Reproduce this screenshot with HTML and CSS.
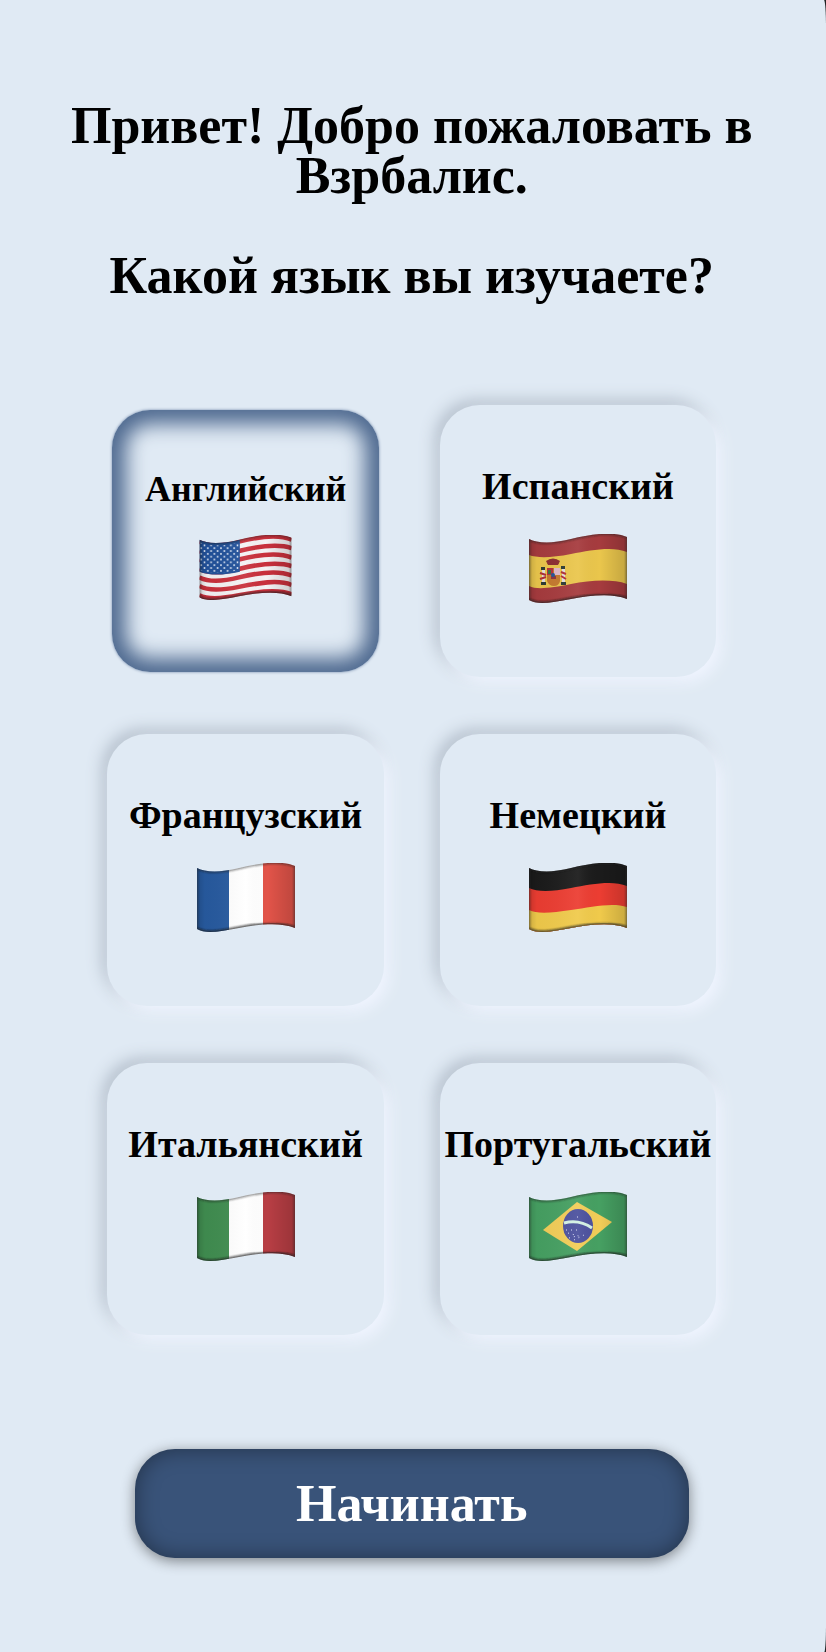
FILE: index.html
```html
<!DOCTYPE html>
<html lang="ru">
<head>
<meta charset="utf-8">
<meta name="viewport" content="width=device-width, initial-scale=1">
<title>Взрбалис</title>
<link rel="stylesheet" href="styles.css">
</head>
<body>
<svg class="defs" aria-hidden="true">
  <defs>
    <clipPath id="wave"><path d="M0 5c8 4 22 5 42 0s42-8 56-2v62c-14-6-36-4-56 0s-34 6-42 1z"/></clipPath>
    <linearGradient id="fold" x1="0" x2="1" y1="0" y2="0">
      <stop offset="0" stop-color="#000" stop-opacity=".16"/>
      <stop offset=".08" stop-color="#000" stop-opacity=".03"/>
      <stop offset=".5" stop-color="#fff" stop-opacity=".06"/>
      <stop offset=".72" stop-color="#000" stop-opacity="0"/>
      <stop offset=".92" stop-color="#000" stop-opacity=".12"/>
      <stop offset="1" stop-color="#000" stop-opacity=".16"/>
    </linearGradient>
    <filter id="soft" x="-10%" y="-10%" width="120%" height="120%"><feGaussianBlur stdDeviation="1.2"/></filter>
    <g id="shade">
      <path d="M0 0h98v70H0z" fill="url(#fold)"/>
      <path d="M0 5c8 4 22 5 42 0s42-8 56-2v62c-14-6-36-4-56 0s-34 6-42 1z" fill="none" stroke="#222" stroke-opacity=".65" stroke-width="2" filter="url(#soft)"/>
      <path d="M98 65c-14-6-36-4-56 0s-34 6-42 1" fill="none" stroke="#222" stroke-opacity=".5" stroke-width="3" filter="url(#soft)"/>
    </g>
    <pattern id="stars" width="7" height="6" patternUnits="userSpaceOnUse">
      <circle cx="2" cy="2" r="1" fill="#e4ecf8"/><circle cx="5.500" cy="5" r="1" fill="#e4ecf8"/>
    </pattern>
  </defs>
</svg>
<main class="page">
  <h1 class="title">Привет! Добро пожаловать в Взрбалис.</h1>
  <h2 class="title question">Какой язык вы изучаете?</h2>
  <form class="form">
    <div class="languages" role="radiogroup" aria-label="Какой язык вы изучаете?">
      <label class="card">
        <input class="choice" type="radio" name="language" value="en" checked>
        <span class="name">Английский</span>
        <svg class="flag" viewBox="0 0 98 70" aria-hidden="true">
          <g clip-path="url(#wave)">
            <path fill="#f4f2f4" d="M0 0h98v70H0z"/>
            <g fill="none" stroke="#c9303c" stroke-width="4.800">
              <path d="M0 7c8 4 22 5 42 0s42-8 56-2"/>
              <path d="M0 17c8 4 22 5 42 0s42-8 56-3"/>
              <path d="M0 26c8 4 22 5 42 0s42-8 56-2"/>
              <path d="M0 36c8 4 22 5 42 0s42-8 56-3"/>
              <path d="M0 45c8 4 22 5 42 0s42-8 56-2"/>
              <path d="M0 54c8 5 22 5 42 1s42-8 56-2"/>
              <path d="M0 64c8 4 22 4 42 0s42-7 56-1"/>
            </g>
            <path fill="#21519a" d="M0 3c10 5 26 6 43 2v34c-17 4-33 4-43 0z"/>
            <path fill="url(#stars)" d="M1 8c10 4 26 4 41 0v29c-17 4-31 4-41 0z"/>
            <use href="#shade"/>
          </g>
        </svg>
      </label>
      <label class="card">
        <input class="choice" type="radio" name="language" value="es">
        <span class="name">Испанский</span>
        <svg class="flag" viewBox="0 0 98 70" aria-hidden="true">
          <g clip-path="url(#wave)">
            <path fill="#a63b3e" d="M0 0h98v70H0z"/>
            <path fill="#eac64c" d="M0 21c8 3 22 3 42-1s42-8 56-2v32c-14-5-36-4-56 0s-34 6-42 2z"/>
            <path fill="#b98a2c" d="M18 30h12v-3l-3-2h-6l-3 2z"/>
            <path fill="#8d2f32" d="M17 27q7-5 14 0l-2 4H19z"/>
            <path fill="#2e3d35" d="M12 33h4v3h-4zm20-1h4v3h-4zM12 48h5v3h-5zm20 0h5v3h-5z"/>
            <path fill="#e4dfdc" d="M13 36h3v12h-3zm20-1h3v13h-3z"/>
            <path stroke="#b02f38" stroke-width="2" fill="none" d="m11 39 6 2m-6 4 6-2m15-5 5 2m-5 2 5 3"/>
            <path fill="#c5792e" d="M18 34h13v13q-1 5-6 5t-7-5z"/>
            <path fill="#b7303c" d="M18 34h6v7h-6z"/>
            <path fill="#dfb8c8" d="M25 34h6v7h-6z"/>
            <path fill="#39724a" d="M19 36h3v4h-3z"/>
            <path fill="#8e3540" d="M24 42v9m-2-9h5v3h-5z"/>
            <circle cx="24" cy="41" r="2" fill="#25559b"/>
            <use href="#shade"/>
          </g>
        </svg>
      </label>
      <label class="card">
        <input class="choice" type="radio" name="language" value="fr">
        <span class="name">Французский</span>
        <svg class="flag" viewBox="0 0 98 70" aria-hidden="true">
          <g clip-path="url(#wave)">
            <path fill="#275a9f" d="M0 0h32v70H0z"/><path fill="#fff" d="M32 0h34v70H32z"/><path fill="#e25449" d="M66 0h32v70H66z"/>
            <use href="#shade"/>
          </g>
        </svg>
      </label>
      <label class="card">
        <input class="choice" type="radio" name="language" value="de">
        <span class="name">Немецкий</span>
        <svg class="flag" viewBox="0 0 98 70" aria-hidden="true">
          <g clip-path="url(#wave)">
            <path fill="#1b1b1b" d="M0 0h98v70H0z"/>
            <path fill="#ec3d32" d="M0 25c8 4 22 4 42 0s42-8 56-2v47H0z"/>
            <path fill="#f0ca4b" d="M0 47c8 4 22 3 42 0s42-8 56-3v26H0z"/>
            <use href="#shade"/>
          </g>
        </svg>
      </label>
      <label class="card">
        <input class="choice" type="radio" name="language" value="it">
        <span class="name">Итальянский</span>
        <svg class="flag" viewBox="0 0 98 70" aria-hidden="true">
          <g clip-path="url(#wave)">
            <path fill="#408d50" d="M0 0h32v70H0z"/><path fill="#fff" d="M32 0h34v70H32z"/><path fill="#b83e44" d="M66 0h32v70H66z"/>
            <use href="#shade"/>
          </g>
        </svg>
      </label>
      <label class="card">
        <input class="choice" type="radio" name="language" value="pt">
        <span class="name">Португальский</span>
        <svg class="flag" viewBox="0 0 98 70" aria-hidden="true">
          <g clip-path="url(#wave)">
            <path fill="#46a062" d="M0 0h98v70H0z"/>
            <path fill="#f2cd58" d="m14 38 34-28 35 20-35 29z"/>
            <ellipse cx="49" cy="34" rx="15" ry="17" fill="#4c519e"/>
            <path fill="none" stroke="#d3f1e4" stroke-width="3" d="M35 31q15-4 28 5"/>
            <path fill="none" stroke="#dfe3f8" stroke-width="1" stroke-dasharray="1 4" d="M37 38h12M39 41l14 4M40 46l8-2M45 48l12-6M48 25h2"/>
            <use href="#shade"/>
          </g>
        </svg>
      </label>
    </div>
    <button class="start" type="button">Начинать</button>
  </form>
</main>
</body>
</html>
```
FILE: styles.css
```css
* { box-sizing: border-box; }

body {
  margin: 0;
  background: #222;
  color: #000;
  font-family: "Liberation Serif", serif;
  font-weight: 700;
}

.defs { position: absolute; width: 0; height: 0; }

.page {
  min-height: 100vh;
  padding: 101px 13.3% 95px 13%;
  background: #e0eaf4;
  border-radius: 0 2px 2px 0 / 0 28px 28px 0;
}

.title {
  margin: 0 -56px;
  font-size: 52px;
  line-height: 50px;
  text-align: center;
}

.question { margin-top: 50px; }

.form {
  display: flex;
  flex-direction: column;
  align-items: center;
  gap: 114px;
  margin-top: 104px;
}

.languages {
  display: grid;
  grid-template-columns: repeat(2, minmax(0, 1fr));
  gap: 56px;
  width: 100%;
}

.card {
  display: flex;
  flex-direction: column;
  align-items: center;
  gap: 29px;
  min-height: 272px;
  padding-top: 62px;
  border-radius: 40px;
  background: #e0eaf4;
  box-shadow: 6px 6px 14px #f0f5ff, -5px -5px 16px #b4bfcc;
  font-size: 38px;
  line-height: 38px;
  cursor: pointer;
}

.languages { row-gap: 57px; }

.choice {
  position: absolute;
  opacity: 0;
  pointer-events: none;
}

.flag { width: 98px; height: 70px; }

.card:has(.choice:checked) {
  gap: 27px;
  min-height: 262px;
  margin: 5px;
  padding-top: 60px;
  border-radius: 38px;
  box-shadow: inset 0 0 20px 14px #4f6a90, 0 0 3px #6f86a8;
  font-size: 36px;
}

.card:has(.choice:checked) .flag { width: 93px; height: 66px; }

.start {
  width: 91%;
  min-height: 109px;
  border: 0;
  border-radius: 40px;
  background: #395379;
  box-shadow: inset 0 0 22px rgba(0, 0, 0, .4), 0 3px 14px rgba(0, 0, 0, .45);
  color: #fff;
  font: inherit;
  font-size: 52px;
  line-height: 56px;
  cursor: pointer;
}
```
